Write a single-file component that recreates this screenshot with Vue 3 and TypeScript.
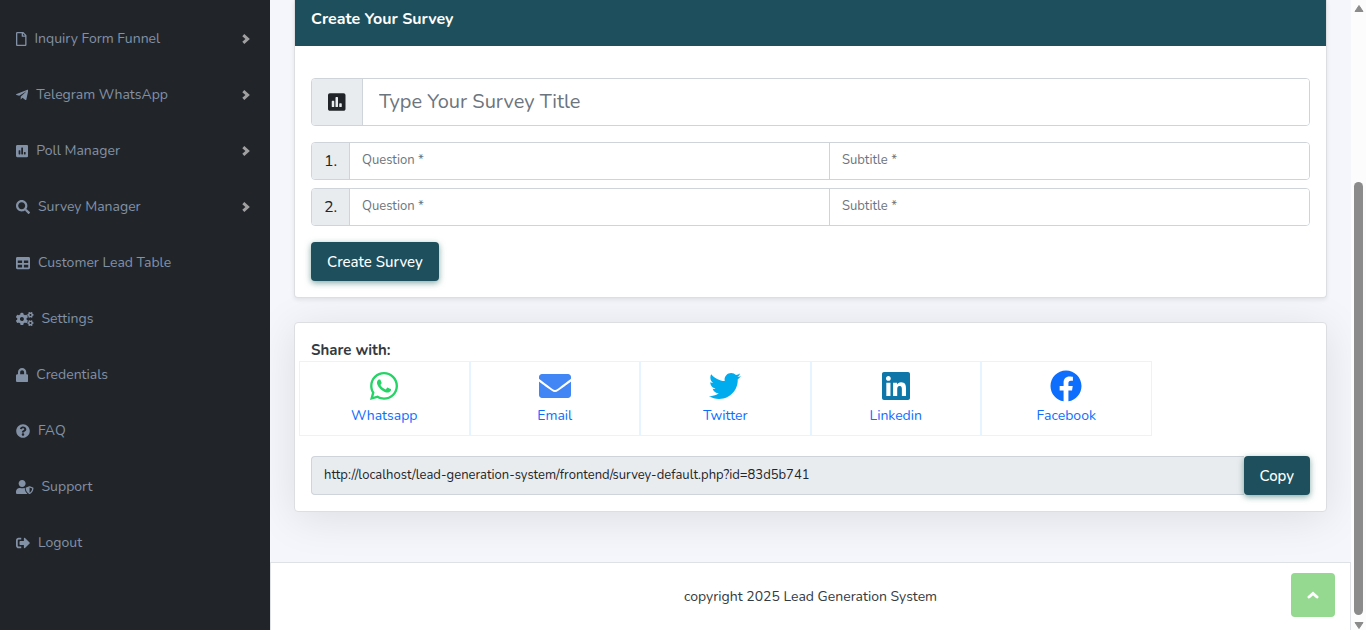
<script setup lang="ts">
import { ref } from 'vue'

interface Icon {
  width: number
  path: string
}

interface MenuItem {
  label: string
  icon: Icon
  nested: boolean
}

interface ShareTarget {
  label: string
  tone: string
  icon: Icon
}

const smallGear =
  'M512.1 191l-8.2 14.3c-3 5.3-9.4 7.5-15.1 5.4-11.8-4.4-22.6-10.7-32.1-18.6-4.6-3.8-5.8-10.5-2.8-15.7l8.2-14.3c-6.9-8-12.3-17.3-15.9-27.4h-16.5c-6 0-11.2-4.3-12.2-10.3-2-12-2.1-24.6 0-37.1 1-6 6.2-10.4 12.2-10.4h16.5c3.6-10.1 9-19.4 15.9-27.4l-8.2-14.3c-3-5.2-1.9-11.9 2.8-15.7 9.5-7.9 20.4-14.2 32.1-18.6 5.7-2.1 12.1.1 15.1 5.4l8.2 14.3c10.5-1.9 21.2-1.9 31.7 0l8.2-14.3c3-5.3 9.4-7.5 15.1-5.4 11.8 4.4 22.6 10.7 32.1 18.6 4.6 3.8 5.8 10.5 2.8 15.7l-8.2 14.3c6.9 8 12.3 17.3 15.9 27.4h16.5c6 0 11.2 4.3 12.2 10.3 2 12 2.1 24.6 0 37.1-1 6-6.2 10.4-12.2 10.4h-16.5c-3.6 10.1-9 19.4-15.9 27.4l8.2 14.3c3 5.2 1.9 11.9-2.8 15.7-9.5 7.9-20.4 14.2-32.1 18.6-5.7 2.1-12.1-.1-15.1-5.4l-8.2-14.3c-10.4 1.9-21.2 1.9-31.7 0zm-10.5-58.8c38.5 29.6 82.4-14.3 52.8-52.8-38.5-29.7-82.4 14.3-52.8 52.8z'
const largeGear =
  'M386.3 286.1l33.7 16.8c10.1 5.8 14.5 18.1 10.5 29.1-8.9 24.2-26.4 46.4-42.6 65.8-7.4 8.9-20.2 11.1-30.3 5.3l-29.1-16.8c-16 13.7-34.6 24.6-54.9 31.7v33.6c0 11.6-8.3 21.6-19.7 23.6-24.6 4.2-50.4 4.4-75.9 0-11.5-2-20-11.9-20-23.6V418c-20.3-7.2-38.9-18-54.9-31.7L74 403c-10 5.8-22.9 3.6-30.3-5.3-16.2-19.4-33.3-41.6-42.2-65.7-4-10.9.4-23.2 10.5-29.1l33.3-16.8c-3.9-20.9-3.9-42.4 0-63.4L12 205.8c-10.1-5.8-14.6-18.1-10.5-29 8.9-24.2 26-46.4 42.2-65.8 7.4-8.9 20.2-11.1 30.3-5.3l29.1 16.8c16-13.7 34.6-24.6 54.9-31.7V57.1c0-11.5 8.2-21.5 19.6-23.5 24.6-4.2 50.5-4.4 76-.1 11.5 2 20 11.9 20 23.6v33.6c20.3 7.2 38.9 18 54.9 31.7l29.1-16.8c10-5.8 22.9-3.6 30.3 5.3 16.2 19.4 33.2 41.6 42.1 65.8 4 10.9.1 23.2-10 29.1l-33.7 16.8c3.9 21 3.9 42.5 0 63.5zm-117.6 21.1c59.2-77-28.7-164.9-105.7-105.7-59.2 77 28.7 164.9 105.7 105.7z'

const pollIcon: Icon = {
  width: 448,
  path: 'M400 32H48C21.5 32 0 53.5 0 80v352c0 26.5 21.5 48 48 48h352c26.5 0 48-21.5 48-48V80c0-26.5-21.5-48-48-48zM160 368c0 8.84-7.16 16-16 16h-32c-8.84 0-16-7.16-16-16V240c0-8.84 7.16-16 16-16h32c8.84 0 16 7.16 16 16v128zm96 0c0 8.84-7.16 16-16 16h-32c-8.84 0-16-7.16-16-16V144c0-8.84 7.16-16 16-16h32c8.84 0 16 7.16 16 16v224zm96 0c0 8.84-7.16 16-16 16h-32c-8.84 0-16-7.16-16-16v-64c0-8.84 7.16-16 16-16h32c8.84 0 16 7.16 16 16v64z',
}

const menu: MenuItem[] = [
  {
    label: 'Inquiry Form Funnel',
    nested: true,
    icon: {
      width: 384,
      path: 'M369.9 97.9L286 14C277 5 264.8-.1 252.1-.1H48C21.5 0 0 21.5 0 48v416c0 26.5 21.5 48 48 48h288c26.5 0 48-21.5 48-48V131.9c0-12.7-5.1-25-14.1-34zM332.1 128H256V51.9l76.1 76.1zM48 464V48h160v104c0 13.3 10.7 24 24 24h104v288H48z',
    },
  },
  {
    label: 'Telegram WhatsApp',
    nested: true,
    icon: {
      width: 448,
      path: 'M446.7 98.6l-67.6 318.8c-5.1 22.5-18.4 28.1-37.3 17.5l-103-75.9-49.7 47.8c-5.5 5.5-10.1 10.1-20.7 10.1l7.4-104.9 190.9-172.5c8.3-7.4-1.8-11.5-12.9-4.1L117.8 284 16.2 252.2c-22.1-6.9-22.5-22.1 4.6-32.7L418.2 66.4c18.4-6.9 34.5 4.1 28.5 32.2z',
    },
  },
  { label: 'Poll Manager', nested: true, icon: pollIcon },
  {
    label: 'Survey Manager',
    nested: true,
    icon: {
      width: 512,
      path: 'M505 442.7L405.3 343c-4.5-4.5-10.6-7-17-7H372c27.6-35.3 44-79.7 44-128C416 93.1 322.9 0 208 0S0 93.1 0 208s93.1 208 208 208c48.3 0 92.7-16.4 128-44v16.3c0 6.4 2.5 12.5 7 17l99.7 99.7c9.4 9.4 24.6 9.4 33.9 0l28.3-28.3c9.4-9.4 9.4-24.6.1-34zM208 336c-70.7 0-128-57.2-128-128 0-70.7 57.2-128 128-128 70.7 0 128 57.2 128 128 0 70.7-57.2 128-128 128z',
    },
  },
  {
    label: 'Customer Lead Table',
    nested: false,
    icon: {
      width: 512,
      path: 'M464 32H48C21.49 32 0 53.49 0 80v352c0 26.51 21.49 48 48 48h416c26.51 0 48-21.49 48-48V80c0-26.51-21.49-48-48-48zM224 416H64v-96h160v96zm0-160H64v-96h160v96zm224 160H288v-96h160v96zm0-160H288v-96h160v96z',
    },
  },
  {
    label: 'Settings',
    nested: false,
    icon: {
      width: 640,
      path: smallGear + smallGear.replace('M512.1 191', 'M512.1 489.6') + largeGear,
    },
  },
  {
    label: 'Credentials',
    nested: false,
    icon: {
      width: 448,
      path: 'M400 224h-24v-72C376 68.2 307.8 0 224 0S72 68.2 72 152v72H48c-26.5 0-48 21.5-48 48v192c0 26.5 21.5 48 48 48h352c26.5 0 48-21.5 48-48V272c0-26.5-21.5-48-48-48zm-104 0H152v-72c0-39.7 32.3-72 72-72s72 32.3 72 72v72z',
    },
  },
  {
    label: 'FAQ',
    nested: false,
    icon: {
      width: 512,
      path: 'M504 256c0 136.997-111.043 248-248 248S8 392.997 8 256C8 119.083 119.043 8 256 8s248 111.083 248 248zM262.655 90c-54.497 0-89.255 22.957-116.549 63.758-3.536 5.286-2.353 12.415 2.715 16.258l34.699 26.31c5.205 3.947 12.621 3.008 16.665-2.122 17.864-22.658 30.113-35.797 57.303-35.797 20.429 0 45.698 13.148 45.698 32.958 0 14.976-12.363 22.667-32.534 33.976C247.128 238.528 216 254.941 216 296v4c0 6.627 5.373 12 12 12h56c6.627 0 12-5.373 12-12v-1.333c0-28.462 83.186-29.647 83.186-106.667 0-58.002-60.165-102-116.531-102zM256 338c-25.365 0-46 20.635-46 46 0 25.364 20.635 46 46 46s46-20.636 46-46c0-25.365-20.635-46-46-46z',
    },
  },
  {
    label: 'Support',
    nested: false,
    icon: {
      width: 640,
      path: 'M622.3 271.1l-115.2-45c-4.1-1.6-12.6-3.7-22.2 0l-115.2 45c-10.7 4.2-17.7 14-17.7 24.9 0 111.6 68.7 188.8 132.9 213.9 9.6 3.7 18 1.6 22.2 0C558.4 489.9 640 420.5 640 296c0-10.9-7-20.7-17.7-24.9zM496 462.4V273.3l95.5 37.3c-5.6 87.1-60.9 135.4-95.5 151.8zM224 256c70.7 0 128-57.3 128-128S294.7 0 224 0 96 57.3 96 128s57.3 128 128 128zm96 40c0-2.5.8-4.8 1.1-7.2-2.5-.1-4.9-.8-7.5-.8h-16.7c-22.2 10.2-46.9 16-72.9 16s-50.6-5.8-72.9-16h-16.7C60.2 288 0 348.2 0 422.4V464c0 26.5 21.5 48 48 48h352c6.8 0 13.3-1.5 19.2-4-54-42.9-99.2-116.7-99.2-212z',
    },
  },
  {
    label: 'Logout',
    nested: false,
    icon: {
      width: 512,
      path: 'M497 273L329 441c-15 15-41 4.5-41-17v-96H152c-13.3 0-24-10.7-24-24v-96c0-13.3 10.7-24 24-24h136V88c0-21.4 25.9-32 41-17l168 168c9.3 9.4 9.3 24.6 0 34zM192 436v-40c0-6.6-5.4-12-12-12H96c-17.7 0-32-14.3-32-32V160c0-17.7 14.3-32 32-32h84c6.6 0 12-5.4 12-12V76c0-6.6-5.4-12-12-12H96c-53 0-96 43-96 96v192c0 53 43 96 96 96h84c6.6 0 12-5.4 12-12z',
    },
  },
]

const shareTargets: ShareTarget[] = [
  {
    label: 'Whatsapp',
    tone: 'whatsapp',
    icon: {
      width: 448,
      path: 'M380.9 97.1C339 55.1 283.2 32 223.9 32c-122.4 0-222 99.6-222 222 0 39.1 10.2 77.3 29.6 111L0 480l117.7-30.9c32.4 17.7 68.9 27 106.1 27h.1c122.3 0 224.1-99.6 224.1-222 0-59.3-25.2-115-67.1-157zm-157 341.6c-33.2 0-65.7-8.9-94-25.7l-6.7-4-69.8 18.3L72 359.2l-4.4-7c-18.5-29.4-28.2-63.3-28.2-98.2 0-101.7 82.8-184.5 184.6-184.5 49.3 0 95.6 19.2 130.4 54.1 34.8 34.9 56.2 81.2 56.1 130.5 0 101.8-84.9 184.6-186.6 184.6zm101.2-138.2c-5.5-2.8-32.8-16.2-37.9-18-5.1-1.9-8.8-2.8-12.5 2.8-3.7 5.6-14.3 18-17.6 21.8-3.2 3.7-6.5 4.2-12 1.4-32.6-16.3-54-29.1-75.5-66-5.7-9.8 5.7-9.1 16.3-30.3 1.8-3.7.9-6.9-.5-9.7-1.4-2.8-12.5-30.1-17.1-41.2-4.5-10.8-9.1-9.3-12.5-9.5-3.2-.2-6.9-.2-10.6-.2-3.7 0-9.7 1.4-14.8 6.9-5.1 5.6-19.4 19-19.4 46.3 0 27.3 19.9 53.7 22.6 57.4 2.8 3.7 39.1 59.7 94.8 83.8 35.2 15.2 49 16.5 66.6 13.9 10.7-1.6 32.8-13.4 37.4-26.4 4.6-13 4.6-24.1 3.2-26.4-1.3-2.5-5-3.9-10.5-6.6z',
    },
  },
  {
    label: 'Email',
    tone: 'email',
    icon: {
      width: 512,
      path: 'M502.3 190.8c3.9-3.1 9.7-.2 9.7 4.7V400c0 26.5-21.5 48-48 48H48c-26.5 0-48-21.5-48-48V195.6c0-5 5.7-7.8 9.7-4.7 22.4 17.4 52.1 39.5 154.1 113.6 21.1 15.4 56.7 47.8 92.2 47.6 35.7.3 72-32.8 92.3-47.6 102-74.1 131.6-96.3 154-113.7zM256 320c23.2.4 56.6-29.2 73.4-41.4 132.7-96.3 142.8-104.7 173.4-128.7 5.8-4.5 9.2-11.5 9.2-18.9v-19c0-26.5-21.5-48-48-48H48c-26.5 0-48 21.5-48 48v19c0 7.4 3.4 14.3 9.2 18.9 30.6 23.9 40.7 32.4 173.4 128.7 16.8 12.2 50.2 41.8 73.4 41.4z',
    },
  },
  {
    label: 'Twitter',
    tone: 'twitter',
    icon: {
      width: 512,
      path: 'M459.37 151.716c.325 4.548.325 9.097.325 13.645 0 138.72-105.583 298.558-298.558 298.558-59.452 0-114.68-17.219-161.137-47.106 8.447.974 16.568 1.299 25.34 1.299 49.055 0 94.213-16.568 130.274-44.832-46.132-.975-84.792-31.188-98.112-72.772 6.498.974 12.995 1.624 19.818 1.624 9.421 0 18.843-1.3 27.614-3.573-48.081-9.747-84.143-51.98-84.143-102.985v-1.299c13.969 7.797 30.214 12.67 47.431 13.319-28.264-18.843-46.781-51.005-46.781-87.391 0-19.492 5.197-37.36 14.294-52.954 51.655 63.675 129.3 105.258 216.365 109.807-1.624-7.797-2.599-15.918-2.599-24.04 0-57.828 46.782-104.934 104.934-104.934 30.213 0 57.502 12.67 76.67 33.137 23.715-4.548 46.456-13.32 66.599-25.34-7.798 24.366-24.366 44.833-46.132 57.827 21.117-2.273 41.584-8.122 60.426-16.243-14.292 20.791-32.161 39.308-52.628 54.253z',
    },
  },
  {
    label: 'Linkedin',
    tone: 'linkedin',
    icon: {
      width: 448,
      path: 'M416 32H31.9C14.3 32 0 46.5 0 64.3v383.4C0 465.5 14.3 480 31.9 480H416c17.6 0 32-14.5 32-32.3V64.3c0-17.8-14.4-32.3-32-32.3zM135.4 416H69V202.2h66.5V416zm-33.2-243c-21.3 0-38.5-17.3-38.5-38.5S80.9 96 102.2 96c21.2 0 38.5 17.3 38.5 38.5 0 21.3-17.2 38.5-38.5 38.5zm282.1 243h-66.4V312c0-24.8-.5-56.7-34.5-56.7-34.6 0-39.9 27-39.9 54.9V416h-66.4V202.2h63.7v29.2h.9c8.9-16.8 30.6-34.5 62.9-34.5 67.2 0 79.7 44.3 79.7 101.9V416z',
    },
  },
  {
    label: 'Facebook',
    tone: 'facebook',
    icon: {
      width: 512,
      path: 'M504 256C504 119 393 8 256 8S8 119 8 256c0 123.78 90.69 226.38 209.25 245V327.69h-63V256h63v-54.64c0-62.15 37-96.48 93.67-96.48 27.14 0 55.52 4.84 55.52 4.84v61h-31.28c-30.8 0-40.41 19.12-40.41 38.73V256h68.78l-11 71.69h-57.78V501C413.31 482.38 504 379.78 504 256z',
    },
  },
]

const title = ref('')
const questions = ref([
  { question: '', subtitle: '' },
  { question: '', subtitle: '' },
])
const surveyUrl = ref('http://localhost/lead-generation-system/frontend/survey-default.php?id=83d5b741')

function copyUrl(): void {
  void navigator.clipboard?.writeText(surveyUrl.value)
}

function toTop(): void {
  window.scrollTo({ top: 0, behavior: 'smooth' })
}
</script>

<template>
  <div class="shell">
    <nav class="sidebar">
      <a v-for="item in menu" :key="item.label" href="#" class="menu-link">
        <svg class="menu-icon" :viewBox="`0 0 ${item.icon.width} 512`" aria-hidden="true">
          <path :d="item.icon.path" />
        </svg>
        <span class="menu-label">{{ item.label }}</span>
        <svg v-if="item.nested" class="menu-arrow" viewBox="0 0 8 10" aria-hidden="true">
          <path d="M1.3 1.1 5.6 5 1.3 8.9" />
        </svg>
      </a>
    </nav>

    <div class="page">
      <main class="content">
        <section class="card survey-card">
          <h1 class="card-header">Create Your Survey</h1>
          <form class="card-body survey-form" @submit.prevent>
            <div class="group group-large">
              <label class="addon" for="survey-title">
                <svg class="addon-icon" viewBox="0 0 448 512" aria-hidden="true">
                  <path :d="pollIcon.path" />
                </svg>
              </label>
              <input
                id="survey-title"
                v-model="title"
                type="text"
                class="field"
                placeholder="Type Your Survey Title"
                aria-label="Type Your Survey Title"
              />
            </div>
            <div class="question-list">
              <div v-for="(row, i) in questions" :key="i" class="group">
                <label class="addon" :for="`question-${i + 1}`">{{ i + 1 }}.</label>
                <input
                  :id="`question-${i + 1}`"
                  v-model="row.question"
                  type="text"
                  class="field"
                  placeholder="Question *"
                />
                <input
                  v-model="row.subtitle"
                  type="text"
                  class="field"
                  placeholder="Subtitle *"
                  aria-label="Subtitle *"
                />
              </div>
            </div>
            <button type="submit" class="button">Create Survey</button>
          </form>
        </section>

        <section class="card share-card">
          <div class="card-body">
            <label class="share-title" for="survey-url">Share with:</label>
            <div class="share-row">
              <a v-for="target in shareTargets" :key="target.label" href="#" class="share-link">
                <svg
                  class="share-icon"
                  :class="target.tone"
                  :viewBox="`0 0 ${target.icon.width} 512`"
                  aria-hidden="true"
                >
                  <path :d="target.icon.path" />
                </svg>
                <span>{{ target.label }}</span>
              </a>
            </div>
            <div class="copy-row">
              <input id="survey-url" v-model="surveyUrl" type="text" class="url-field" readonly />
              <button type="button" class="button" @click="copyUrl">Copy</button>
            </div>
          </div>
        </section>
      </main>
      <footer class="footer">copyright 2025 Lead Generation System</footer>
    </div>

    <div class="scrollbar" aria-hidden="true">
      <svg class="scroll-arrow" viewBox="0 0 10 8"><path d="M5 1 9 7H1z" /></svg>
      <div class="track"><div class="thumb"></div></div>
      <svg class="scroll-arrow" viewBox="0 0 10 8"><path d="M5 7 1 1h8z" /></svg>
    </div>

    <button type="button" class="to-top" aria-label="Top" @click="toTop">
      <svg viewBox="0 0 12 8" aria-hidden="true"><path d="M2 6 6 2.4 10 6" /></svg>
    </button>
  </div>
</template>

<style>
html,
body {
  background: #f4f6fb;
}
</style>

<style scoped>
.shell,
.shell * {
  box-sizing: border-box;
}

.shell {
  display: flex;
  min-height: 100vh;
  font-family: Nunito, Lato, "Open Sans", sans-serif;
  font-size: 14px;
  line-height: 24px;
  color: #343a40;
}

.sidebar {
  position: relative;
  z-index: 1;
  flex: 0 0 270px;
  display: flex;
  flex-direction: column;
  padding-top: 11px;
  background: #212529;
}

.menu-link {
  display: flex;
  align-items: center;
  height: 56px;
  padding: 0 20px 0 16px;
  color: #8391a6;
  text-decoration: none;
}

.menu-icon {
  height: 14px;
  fill: currentColor;
}

.menu-label {
  flex: 1;
  padding-left: 8px;
}

.menu-arrow {
  width: 8px;
  height: 10px;
  fill: none;
  stroke: #a0a0a0;
  stroke-width: 3;
}

.page {
  flex: 1;
  min-width: 0;
  display: flex;
  flex-direction: column;
  background: #f4f6fb;
}

.content {
  display: flex;
  flex-direction: column;
  gap: 24px;
  padding: 0 24px 50px;
}

.card {
  background: #fff;
  border: 1px solid #dcdee2;
  border-radius: 4px;
}

.survey-card {
  position: relative;
  border-top: 0;
  border-radius: 0 0 4px 4px;
  box-shadow: 0 2px 4px rgba(0, 0, 0, 0.08);
}

.share-card {
  box-shadow: 0 6px 44px rgba(0, 0, 0, 0.1);
}

.card-header {
  margin: 0;
  padding: 7px 16px 15px;
  background: #1e4f5c;
  color: #fff;
  font-size: 16px;
  font-weight: 700;
  line-height: 24px;
}

.card-body {
  padding: 16px;
}

.survey-form {
  display: flex;
  flex-direction: column;
  gap: 16px;
  padding-top: 32px;
}

.question-list {
  display: flex;
  flex-direction: column;
  gap: 8px;
}

.group {
  display: flex;
  height: 38px;
  border: 1px solid #ced4da;
  border-radius: 4px;
  overflow: hidden;
}

.group-large {
  height: 48px;
}

.addon {
  display: flex;
  align-items: center;
  justify-content: center;
  flex: 0 0 37px;
  background: #e9ecef;
  color: #212529;
  font-size: 16px;
}

.group-large .addon {
  flex-basis: 50px;
}

.addon-icon {
  height: 20px;
  fill: #212529;
}

.field {
  flex: 1;
  min-width: 0;
  padding: 0 12px 3px;
  border: 0;
  border-left: 1px solid #ced4da;
  background: #fff;
  color: #212529;
  font-family: inherit;
  font-size: 13px;
}

.group-large .field {
  padding: 0 16px 2px;
  font-size: 20px;
}

.field::placeholder {
  color: #6c757d;
  opacity: 1;
}

.button {
  align-self: flex-start;
  height: 39px;
  padding: 0 16px;
  border: 0;
  border-radius: 4px;
  background: #1e4f5c;
  box-shadow: 0 2px 6px rgba(30, 100, 92, 0.55);
  color: #fff;
  font-family: inherit;
  font-size: 15px;
  font-weight: 500;
  line-height: 24px;
  cursor: pointer;
}

.share-title {
  display: block;
  font-size: 15px;
  line-height: 22px;
  font-weight: 700;
}

.share-row {
  display: flex;
  margin: 0 -12px 20px;
}

.share-link {
  flex: 0 0 calc(100% / 6);
  display: flex;
  flex-direction: column;
  align-items: center;
  height: 75px;
  padding-top: 8px;
  border: 1px solid #e6f4ff;
  color: #0d6efd;
  text-decoration: none;
}

.share-icon {
  height: 32px;
  margin-bottom: 2px;
}

.whatsapp {
  fill: #25d366;
}

.email {
  fill: #4285f4;
}

.twitter {
  fill: #00acee;
}

.linkedin {
  fill: #0e76a8;
}

.facebook {
  fill: #0d6efd;
}

.copy-row {
  display: flex;
}

.url-field {
  flex: 1;
  min-width: 0;
  height: 39px;
  padding: 0 12px 2px;
  border: 1px solid #ced4da;
  border-right: 0;
  border-radius: 4px 0 0 4px;
  background: #e9ecef;
  color: #212529;
  font-family: inherit;
  font-size: 13px;
}

.footer {
  flex: 1;
  padding: 22px 16px;
  border: 1px solid #dee2e6;
  border-bottom: 0;
  background: #fff;
  text-align: center;
}

.scrollbar {
  position: sticky;
  top: 0;
  flex: 0 0 15px;
  display: flex;
  flex-direction: column;
  align-items: center;
  height: 100vh;
  padding: 4px 0 0;
  background: #fcfcfc;
}

.scroll-arrow {
  width: 10px;
  height: 9px;
  fill: #8b8b8b;
  stroke: #8b8b8b;
  stroke-linejoin: round;
}

.track {
  flex: 1;
  display: flex;
  align-items: flex-end;
  padding-bottom: 6px;
}

.thumb {
  width: 9px;
  height: 72%;
  border-radius: 5px;
  background: #8b8b8b;
}

.to-top {
  position: fixed;
  right: 31px;
  bottom: 13px;
  display: flex;
  align-items: center;
  justify-content: center;
  width: 44px;
  height: 44px;
  padding: 0;
  border: 0;
  border-radius: 4px;
  background: #95d88f;
  cursor: pointer;
}

.to-top svg {
  width: 12px;
  height: 8px;
  fill: none;
  stroke: #fff;
  stroke-width: 3;
  stroke-linecap: round;
}
</style>
